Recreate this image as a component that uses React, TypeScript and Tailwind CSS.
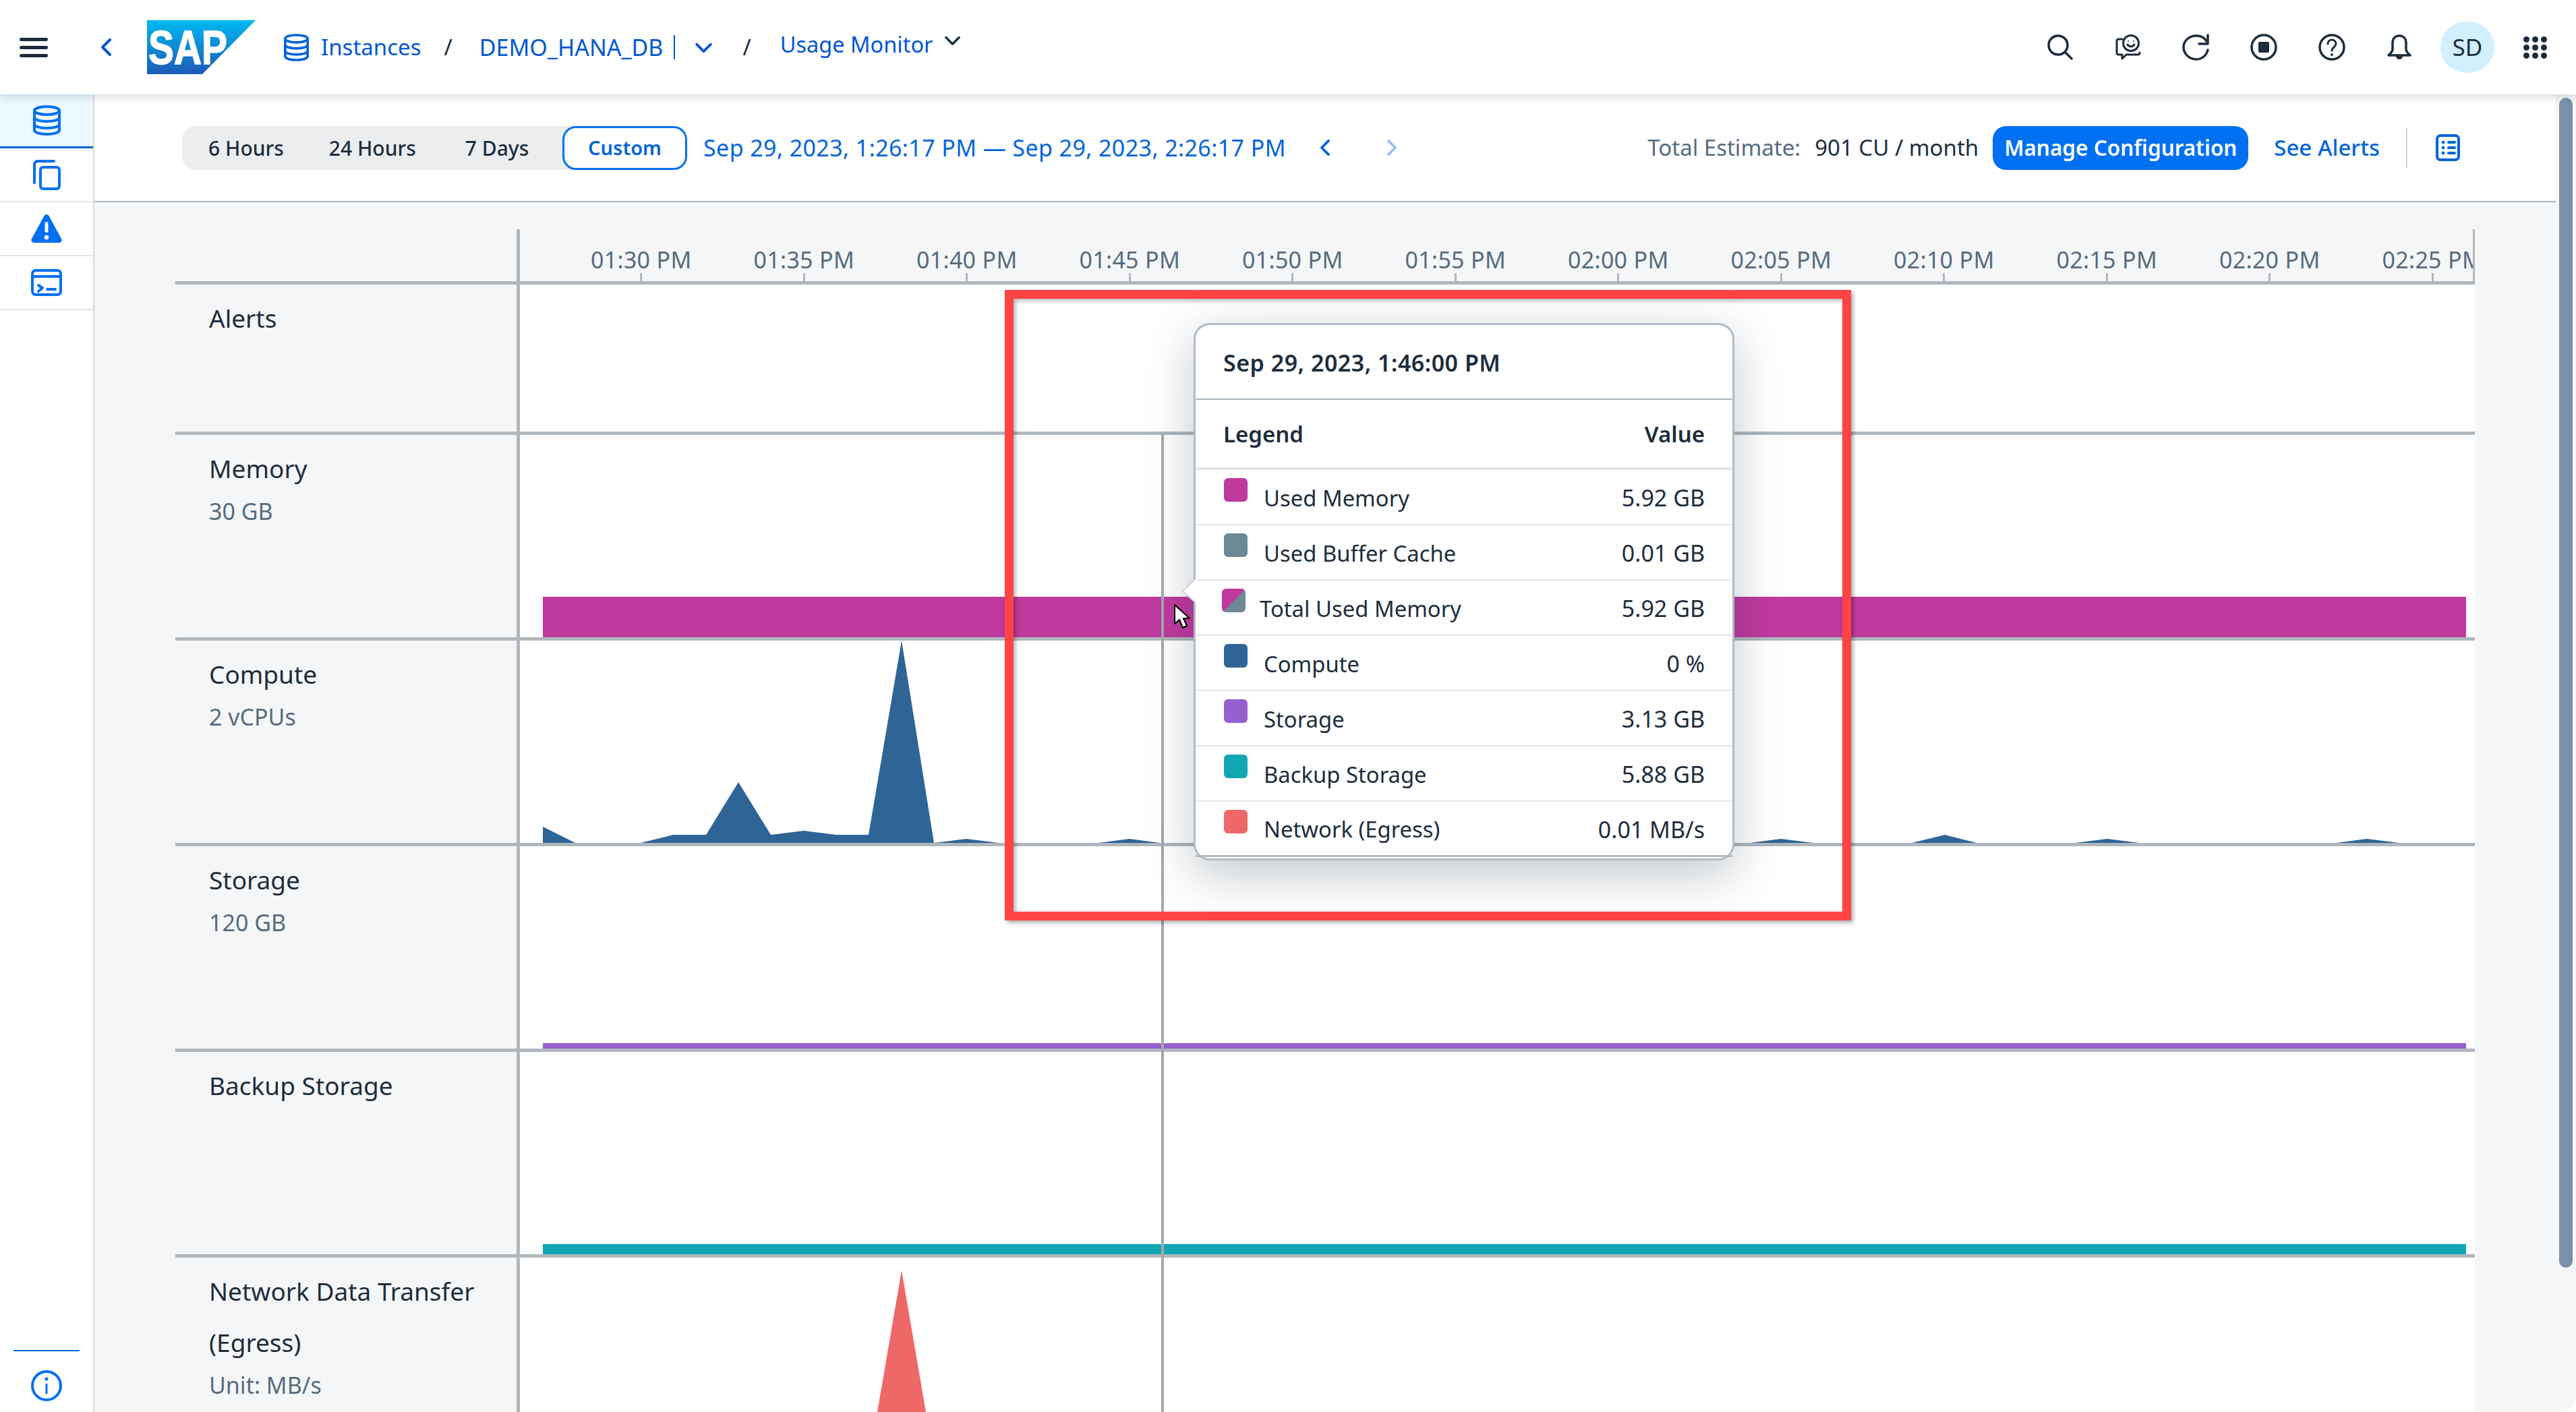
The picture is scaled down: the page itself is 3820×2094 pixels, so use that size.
import type { ReactNode } from 'react';

const ticks = ['01:30 PM', '01:35 PM', '01:40 PM', '01:45 PM', '01:50 PM', '01:55 PM', '02:00 PM', '02:05 PM', '02:10 PM', '02:15 PM', '02:20 PM', '02:25 PM'];

const legend = [
  { label: 'Used Memory', value: '5.92 GB', swatch: 'bg-[#c0399f]' },
  { label: 'Used Buffer Cache', value: '0.01 GB', swatch: 'bg-[#6e8996]' },
  { label: 'Total Used Memory', value: '5.92 GB', swatch: 'bg-[linear-gradient(135deg,#c0399f_50%,#6e8996_50%)]', tight: true },
  { label: 'Compute', value: '0 %', swatch: 'bg-[#2f6497]' },
  { label: 'Storage', value: '3.13 GB', swatch: 'bg-[#965fcf]' },
  { label: 'Backup Storage', value: '5.88 GB', swatch: 'bg-[#12a6b3]' },
  { label: 'Network (Egress)', value: '0.01 MB/s', swatch: 'bg-[#ef6868]' },
];

function Db({ className }: { className: string }) {
  return (
    <svg viewBox="0 0 41 45" className={className} fill="none" stroke="currentColor" strokeWidth="4">
      <ellipse cx="20.5" cy="8" rx="18.5" ry="6" />
      <path d="M2 8v29c0 3.500 8 6 18.500 6S39 40.500 39 37V8M2 18c0 3.500 8 6 18.500 6S39 21.500 39 18M2 28c0 3.500 8 6 18.500 6S39 31.500 39 28" />
    </svg>
  );
}

function TopIcon({ children }: { children: ReactNode }) {
  return <div className="flex w-[100.7px] justify-center text-[#1d2d3e]">{children}</div>;
}

function RowLabel({ title, sub }: { title: ReactNode; sub?: string }) {
  return (
    <div className="w-[511px] shrink-0 border-r-[5px] border-[#b0b7bd] pl-[50px] pt-[12px]">
      <div className="text-[37px] leading-[76px] text-[#1d2d3e]">{title}</div>
      {sub && <div className="text-[34px] leading-[50px] text-[#556b82]">{sub}</div>}
    </div>
  );
}

function Row({ title, sub, children, height }: { title: string; sub?: string; children?: ReactNode; height: string }) {
  return (
    <div className={`flex shrink-0 border-b-[5px] border-[#b0b7bd] ${height}`}>
      <RowLabel title={title} sub={sub} />
      <div className="flex flex-1 flex-col justify-end bg-white pl-[34px] pr-[13px]">{children}</div>
    </div>
  );
}

function TopBar() {
  return (
    <header className="relative z-10 flex h-[140px] shrink-0 items-center bg-white pl-[29px] shadow-[0_2px_14px_rgba(34,54,73,0.22)]">
      <div className="flex w-[42px] flex-col gap-[7px]">
        <div className="h-[5px] rounded-full bg-[#1d2d3e]" />
        <div className="h-[5px] rounded-full bg-[#1d2d3e]" />
        <div className="h-[5px] rounded-full bg-[#1d2d3e]" />
      </div>
      <svg viewBox="0 0 16 26" className="ml-[78px] h-[26px] w-[16px]" fill="none" stroke="#0057d2" strokeWidth="4" strokeLinecap="round" strokeLinejoin="round">
        <path d="M14 2 3 13l11 11" />
      </svg>
      <svg viewBox="0 0 161 80" className="ml-[53px] h-[80px] w-[161px]">
        <defs>
          <linearGradient id="sap" x1="0" y1="0" x2="0" y2="1">
            <stop offset="0" stopColor="#00b8f1" />
            <stop offset="1" stopColor="#1e5bb8" />
          </linearGradient>
        </defs>
        <polygon points="0,0 161,0 82,80 0,80" fill="url(#sap)" />
        <text x="2" y="65" fill="#fff" stroke="#fff" strokeWidth="1.500" fontFamily="Liberation Sans" fontWeight="700" fontSize="70" textLength="117" lengthAdjust="spacingAndGlyphs">SAP</text>
      </svg>
      <Db className="ml-[42px] h-[41px] w-[37px] text-[#0064d9]" />
      <span className="ml-[18px] text-[33px] text-[#0057d2]">Instances</span>
      <span className="ml-[34px] text-[33px] text-[#1d2d3e]">/</span>
      <span className="ml-[40px] text-[34px] text-[#0057d2]">DEMO_HANA_DB</span>
      <div className="ml-[16px] h-[36px] w-[2px] bg-[#0057d2]" />
      <svg viewBox="0 0 26 16" className="ml-[30px] h-[15px] w-[25px]" fill="none" stroke="#0057d2" strokeWidth="4" strokeLinecap="round" strokeLinejoin="round">
        <path d="m2 3 11 11L24 3" />
      </svg>
      <span className="ml-[45px] text-[33px] text-[#1d2d3e]">/</span>
      <span className="ml-[43px] -mt-[8px] text-[32.500px] text-[#0057d2]">Usage Monitor</span>
      <svg viewBox="0 0 26 16" className="ml-[16px] -mt-[20px] h-[14px] w-[25px]" fill="none" stroke="#1d2d3e" strokeWidth="4" strokeLinecap="round" strokeLinejoin="round">
        <path d="m2 3 11 11L24 3" />
      </svg>

      <div className="ml-auto mr-[10px] flex items-center">
        <TopIcon>
          <svg viewBox="0 0 38 38" className="h-[38px] w-[38px]" fill="none" stroke="currentColor" strokeWidth="3.500" strokeLinecap="round">
            <circle cx="16" cy="16" r="14" />
            <path d="m26 26 10 10" />
          </svg>
        </TopIcon>
        <TopIcon>
          <svg viewBox="0 0 38 38" className="h-[38px] w-[38px]" fill="none" stroke="currentColor" strokeWidth="3" strokeLinecap="round" strokeLinejoin="round">
            <path d="M10 7H5c-2 0-3 1-3 3v17c0 2 1 3 3 3h5v6l6-6h17c2 0 3-1 3-3" />
            <circle cx="23" cy="13" r="11.500" />
            <circle cx="19" cy="10" r="1" fill="currentColor" stroke="none" />
            <circle cx="27" cy="10" r="1" fill="currentColor" stroke="none" />
            <path d="M18 15c2 4 8 4 10 0" />
          </svg>
        </TopIcon>
        <TopIcon>
          <svg viewBox="0 0 40 40" className="h-[40px] w-[40px]" fill="none" stroke="currentColor" strokeWidth="3.500" strokeLinecap="round" strokeLinejoin="round">
            <path d="M38 24c-1.500 8-9 14-17 14C11 38 2 30 2 20S11 3 21 3c7 0 12 3 15 8" />
            <path d="M38 2v13H25" />
          </svg>
        </TopIcon>
        <TopIcon>
          <svg viewBox="0 0 40 40" className="h-[40px] w-[40px]" fill="none" stroke="currentColor" strokeWidth="3.500">
            <circle cx="20" cy="20" r="18" />
            <rect x="12" y="12" width="16" height="16" rx="2" fill="currentColor" stroke="none" />
          </svg>
        </TopIcon>
        <TopIcon>
          <svg viewBox="0 0 40 40" className="h-[40px] w-[40px]" fill="none" stroke="currentColor" strokeWidth="3.500" strokeLinecap="round">
            <circle cx="20" cy="20" r="18" />
            <path d="M14 15c0-4 3-6 6-6s6 2 6 6c0 5-6 5-6 10" strokeWidth="3" />
            <circle cx="20" cy="31" r="2" fill="currentColor" stroke="none" />
          </svg>
        </TopIcon>
        <TopIcon>
          <svg viewBox="0 0 38 38" className="h-[38px] w-[38px]" fill="none" stroke="currentColor" strokeWidth="3.500" strokeLinejoin="round">
            <path d="M19 2c-7 0-10 5-10 11v9c0 4-3 6-6 9h32c-3-3-6-5-6-9v-9c0-6-3-11-10-11Z" />
            <path d="M14 32c0 3 2 5 5 5s5-2 5-5Z" fill="currentColor" stroke="none" />
          </svg>
        </TopIcon>
        <div className="flex w-[100.7px] justify-center">
          <div className="flex h-[76px] w-[80px] items-center justify-center rounded-full bg-[#d1efff] text-[35px] text-[#1d2d3e]">SD</div>
        </div>
        <TopIcon>
          <div className="grid grid-cols-3 gap-x-[4px] gap-y-[3px]">
            {Array.from({ length: 9 }).map((_, i) => (
              <div key={i} className="h-[9px] w-[9px] rounded-full bg-[#1d2d3e]" />
            ))}
          </div>
        </TopIcon>
      </div>
    </header>
  );
}

function Sidebar() {
  return (
    <aside className="flex w-[140px] shrink-0 flex-col border-r-2 border-[#d9d9d9] bg-white text-[#0070f2]">
      <div className="flex h-[80px] items-center justify-center border-b-[3px] border-[#0064d9] bg-[#ebf8ff]">
        <Db className="h-[45px] w-[41px]" />
      </div>
      <div className="flex h-[80px] items-center justify-center border-b-2 border-[#e5e5e5]">
        <svg viewBox="0 0 41 45" className="h-[45px] w-[41px]" fill="none" stroke="currentColor" strokeWidth="4" strokeLinecap="round">
          <rect x="11" y="11" width="28" height="32" rx="4" />
          <path d="M2 34V7c0-3 2-5 5-5h24" />
        </svg>
      </div>
      <div className="flex h-[80px] items-center justify-center border-b-2 border-[#e5e5e5]">
        <svg viewBox="0 0 46 42" className="h-[42px] w-[46px]">
          <path d="M23 0c2 0 3 1 4 3l18 33c1.500 3 0 6-3 6H4c-3 0-4.500-3-3-6L19 3c1-2 2-3 4-3Z" fill="currentColor" />
          <rect x="20.500" y="11" width="5" height="16" rx="2.500" fill="#fff" />
          <circle cx="23" cy="34" r="3.300" fill="#fff" />
        </svg>
      </div>
      <div className="flex h-[80px] items-center justify-center border-b-2 border-[#e5e5e5]">
        <svg viewBox="0 0 46 40" className="h-[40px] w-[46px]" fill="none" stroke="currentColor" strokeWidth="4" strokeLinecap="round" strokeLinejoin="round">
          <rect x="2" y="2" width="42" height="36" rx="5" />
          <path d="M2 11h42M11 24l6 4-6 5M24 30h12" />
        </svg>
      </div>
      <div className="mt-auto mx-[20px] h-[2px] bg-[#0064d9]" />
      <div className="mb-[16px] mt-[28px] flex justify-center">
        <svg viewBox="0 0 46 46" className="h-[46px] w-[46px]" fill="none" stroke="currentColor" strokeWidth="4" strokeLinecap="round">
          <circle cx="23" cy="23" r="21" />
          <path d="M23 21v13" strokeWidth="3" />
          <circle cx="23" cy="13" r="2.500" fill="currentColor" stroke="none" />
        </svg>
      </div>
    </aside>
  );
}

function Toolbar() {
  return (
    <div className="flex h-[160px] shrink-0 items-center border-b-2 border-[#a9b4be] bg-white pl-[130px] pr-[142px]">
      <div className="flex h-[65px] w-[749px] items-center rounded-[20px] bg-[#ebedef] text-[30px] font-medium text-[#1d2d3e]">
        <span className="ml-[39px]">6 Hours</span>
        <span className="ml-[67px]">24 Hours</span>
        <span className="ml-[73px]">7 Days</span>
        <span className="ml-auto flex h-[65px] w-[185px] items-center justify-center rounded-[20px] border-[3px] border-[#0070f2] bg-white text-[29px] font-semibold text-[#0064d9]">Custom</span>
      </div>
      <span className="ml-[24px] text-[34px] tracking-[0.4px] text-[#0064d9]">Sep 29, 2023, 1:26:17 PM — Sep 29, 2023, 2:26:17 PM</span>
      <svg viewBox="0 0 16 26" className="ml-[50px] h-[24px] w-[15px]" fill="none" stroke="#0064d9" strokeWidth="4" strokeLinecap="round" strokeLinejoin="round">
        <path d="M14 2 3 13l11 11" />
      </svg>
      <svg viewBox="0 0 16 26" className="ml-[85px] h-[24px] w-[15px]" fill="none" stroke="#94bff2" strokeWidth="4" strokeLinecap="round" strokeLinejoin="round">
        <path d="m2 2 11 11L2 24" />
      </svg>
      <div className="ml-auto flex items-center">
        <span className="text-[33px] text-[#556b82]">Total Estimate:</span>
        <span className="ml-[21px] text-[33px] text-[#1d2d3e]">901 CU / month</span>
        <button className="ml-[21px] flex h-[65px] w-[379px] items-center justify-center rounded-[20px] bg-[#0070f2] text-[31.500px] font-semibold text-white">Manage Configuration</button>
        <span className="ml-[38px] text-[33px] font-medium text-[#0064d9]">See Alerts</span>
        <div className="ml-[39px] h-[60px] w-[2px] bg-[#d9d9d9]" />
        <svg viewBox="0 0 36 40" className="ml-[42px] h-[40px] w-[36px]" fill="none" stroke="#0064d9" strokeWidth="4">
          <rect x="2" y="2" width="32" height="36" rx="5" />
          <path d="M19 12h9M19 20h9M19 28h9" strokeLinecap="round" strokeWidth="4" />
          <circle cx="11" cy="12" r="2" fill="#0064d9" strokeWidth="1" />
          <circle cx="11" cy="20" r="2" fill="#0064d9" strokeWidth="1" />
          <circle cx="11" cy="28" r="2" fill="#0064d9" strokeWidth="1" />
        </svg>
      </div>
    </div>
  );
}

function Axis() {
  return (
    <div className="mt-[40px] flex h-[82px] shrink-0 border-b-[5px] border-[#b0b7bd]">
      <div className="w-[511px] shrink-0 border-r-[5px] border-[#b0b7bd]" />
      <div className="flex w-[2899px] shrink-0 overflow-hidden border-r-[3px] border-[#b0b7bd] pl-[59px]">
        {ticks.map((t) => (
          <div key={t} className="flex w-[241.5px] shrink-0 flex-col items-center">
            <span className="mt-[25px] whitespace-nowrap text-[34px] leading-[40px] tracking-[0.3px] text-[#556b82]">{t}</span>
            <div className="mt-auto h-[12px] w-[3px] bg-[#b0b7bd]" />
          </div>
        ))}
      </div>
    </div>
  );
}

function ChartArea() {
  return (
    <div className="flex min-h-0 flex-1 flex-col overflow-hidden bg-[#f5f6f7] pl-[120px] pr-[120px]">
      <Axis />
      <Row title="Alerts" height="h-[223px]" />
      <Row title="Memory" sub="30 GB" height="h-[305px]">
        <div className="h-[60px] bg-[#c0399f]" />
      </Row>
      <div className="flex h-[305px] shrink-0 border-b-[5px] border-[#b0b7bd]">
        <RowLabel title="Compute" sub="2 vCPUs" />
        <div className="flex-1 bg-white">
          <svg viewBox="0 0 2899 300" className="block h-[300px] w-[2899px]">
            <polygon
              fill="#2f6497"
              points="34,300 34,276 82,300 179,300 227.500,288 276,288 324,210 372,288 421,282 469,288 517,288 566,0 614,300 662,294 710,300 858,300 904,294 949,300 1824,300 1870,294 1918,300 2064,300 2113,288 2160,300 2306,300 2354,294 2401,300 2693,300 2739,294 2788,300"
            />
          </svg>
        </div>
      </div>
      <Row title="Storage" sub="120 GB" height="h-[305px]">
        <div className="h-[8px] bg-[#965fcf]" />
      </Row>
      <Row title="Backup Storage" height="h-[305px]">
        <div className="h-[15px] bg-[#12a6b3]" />
      </Row>
      <div className="flex min-h-0 flex-1">
        <RowLabel
          title={
            <>
              Network Data Transfer
              <br />
              (Egress)
            </>
          }
          sub="Unit: MB/s"
        />
        <div className="flex-1 bg-white">
          <svg viewBox="0 0 2899 229" className="block h-[229px] w-[2899px]">
            <polygon fill="#ef6868" points="566,19 530,229 602,229" />
          </svg>
        </div>
      </div>
    </div>
  );
}

function Tooltip() {
  return (
    <div className="absolute left-[1770px] top-[479px] flex h-[797px] w-[802px] flex-col rounded-[24px] border-[3px] border-[#b3bcc6] bg-white text-[#1d2d3e] shadow-[0_20px_70px_rgba(34,54,73,0.28)]">
      <svg viewBox="0 0 22 36" className="absolute -left-[21px] top-[377px] h-[36px] w-[22px]">
        <polygon points="20,0 2,18 20,34 22,34 22,0" fill="#fff" />
        <path d="M20 0 2 18l18 16" fill="none" stroke="#cfd5da" strokeWidth="2" />
      </svg>
      <div className="flex h-[111px] shrink-0 items-center border-b-2 border-[#a9b4be] px-[41px] pt-[4px] text-[34px] font-semibold tracking-[0.5px]">Sep 29, 2023, 1:46:00 PM</div>
      <div className="flex h-[104px] shrink-0 items-center justify-between border-b-4 border-[#e5e5e5] px-[41px] pt-[2px] text-[33px] font-semibold">
        <span>Legend</span>
        <span>Value</span>
      </div>
      {legend.map((item, i) => (
        <div key={item.label} className={`flex h-[82px] shrink-0 items-center justify-between pl-[42px] pr-[41px] pt-[3px] text-[32.800px] ${i === legend.length - 1 ? 'border-b-[3px] border-[#b3bcc6]' : 'border-b-2 border-[#e5e5e5]'}`}>
          <div className={`flex items-center ${item.tight ? '-ml-[3px]' : ''}`}>
            <div className={`-mt-[24px] h-[35px] w-[35px] rounded-[6px] ${item.swatch}`} />
            <span className={item.tight ? 'ml-[21px]' : 'ml-[24px]'}>{item.label}</span>
          </div>
          <span className="text-[34px]">{item.value}</span>
        </div>
      ))}
    </div>
  );
}

export default function App() {
  return (
    <div className="relative flex h-[2094px] w-[3820px] flex-col overflow-hidden rounded-[24px] bg-white font-['Noto_Sans',sans-serif]">
      <TopBar />
      <div className="flex min-h-0 flex-1">
        <Sidebar />
        <main className="flex min-w-0 flex-1 flex-col">
          <Toolbar />
          <ChartArea />
        </main>
        <div className="w-[30px] shrink-0 bg-[#f5f6f7] pb-[214px] pl-[5px] pr-[5px] pt-[5px]">
          <div className="h-full rounded-full bg-[#7b90a8]" />
        </div>
      </div>

      {/* crosshair, annotation and popover sit over the chart */}
      <div className="absolute bottom-0 left-[1722px] top-[645px] w-[4px] bg-[#a3a8ad]" />
      <div className="absolute left-[1490px] top-[430px] h-[935px] w-[1255px] border-[13px] border-[#ff4444] shadow-[3px_3px_6px_rgba(0,0,0,0.35),inset_3px_3px_6px_rgba(0,0,0,0.3)]" />
      <Tooltip />
      <svg viewBox="0 0 26 36" className="absolute left-[1740px] top-[896px] h-[36px] w-[26px]">
        <path d="M2 1v28l7-6 5 12 6-3-5-11h9Z" fill="#fff" stroke="#000" strokeWidth="2" strokeLinejoin="round" />
      </svg>
    </div>
  );
}
